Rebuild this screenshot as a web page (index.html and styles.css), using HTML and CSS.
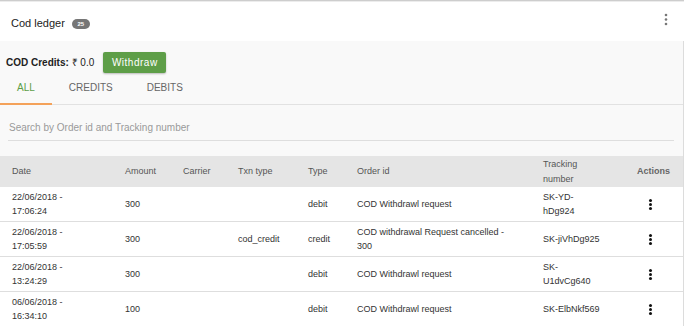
FILE: index.html
```html
<!DOCTYPE html>
<html>
<head>
<meta charset="utf-8">
<title>Cod ledger</title>
<link rel="stylesheet" href="styles.css">
</head>
<body>
<!-- card header -->
<div class="topbar">
	<h1 class="title">Cod ledger</h1>
	<span class="badge">25</span>
	<button class="menu">
		<svg width="4" height="14" viewBox="0 0 4 14"><circle cx="2" cy="2" r="1.3"/><circle cx="2" cy="6.5" r="1.3"/><circle cx="2" cy="11" r="1.3"/></svg>
	</button>
</div>

<div class="panel">
	<div class="credits">
		<span class="credits-label"><b>COD Credits:</b> ₹ 0.0</span>
		<button class="withdraw">Withdraw</button>
	</div>

	<div class="tabs">
		<span class="tab active">ALL</span>
		<span class="tab">CREDITS</span>
		<span class="tab">DEBITS</span>
	</div>

	<div class="search">
		<input type="text" placeholder="Search by Order id and Tracking number">
	</div>

	<table class="ledger">
		<colgroup>
			<col style="width:113px"><col style="width:58px"><col style="width:55px"><col style="width:70px">
			<col style="width:49px"><col style="width:186px"><col style="width:94px"><col style="width:58px">
		</colgroup>
		<thead>
			<tr>
				<th class="date">Date</th>
				<th>Amount</th>
				<th>Carrier</th>
				<th>Txn type</th>
				<th>Type</th>
				<th>Order id</th>
				<th class="track">Tracking number</th>
				<th class="actions">Actions</th>
			</tr>
		</thead>
		<tbody>
			<tr>
				<td class="date">22/06/2018 - 17:06:24</td>
				<td>300</td>
				<td></td>
				<td></td>
				<td>debit</td>
				<td>COD Withdrawl request</td>
				<td class="track">SK-YD-hDg924</td>
				<td class="actions"><span class="dots"></span></td>
			</tr>
			<tr>
				<td class="date">22/06/2018 - 17:05:59</td>
				<td>300</td>
				<td></td>
				<td>cod_credit</td>
				<td>credit</td>
				<td>COD withdrawal Request cancelled - 300</td>
				<td class="track">SK-jiVhDg925</td>
				<td class="actions"><span class="dots"></span></td>
			</tr>
			<tr>
				<td class="date">22/06/2018 - 13:24:29</td>
				<td>300</td>
				<td></td>
				<td></td>
				<td>debit</td>
				<td>COD Withdrawl request</td>
				<td class="track">SK-U1dvCg640</td>
				<td class="actions"><span class="dots"></span></td>
			</tr>
			<tr>
				<td class="date">06/06/2018 - 16:34:10</td>
				<td>100</td>
				<td></td>
				<td></td>
				<td>debit</td>
				<td>COD Withdrawl request</td>
				<td class="track">SK-ElbNkf569</td>
				<td class="actions"><span class="dots"></span></td>
			</tr>
		</tbody>
	</table>
</div>
</body>
</html>
```

FILE: styles.css
```css
body {
	margin: 0;
	font-family: "Liberation Sans", Arial, Helvetica, sans-serif;
	background-color: #fff;
	color: #333;
}

/* header bar */
.topbar {
	height: 41px;
	display: flex;
	align-items: center;
	padding: 3px 15px 0 11px;
	box-sizing: border-box;
	border-top: 1px solid #cdcdcd;
	box-shadow: inset 0 1px 0 #ececec;
	background: #fff;
}
.title {
	margin: 0;
	font-size: 11px;
	font-weight: normal;
	color: #222;
}
.badge {
	margin: 3px 0 0 7px;
	width: 18px;
	height: 10px;
	line-height: 10px;
	border-radius: 5px;
	background: #767676;
	color: #fff;
	font-size: 6px;
	font-weight: bold;
	text-align: center;
}
.menu {
	margin-left: auto;
	margin-top: -5px;
	margin-right: 1px;
	padding: 0;
	border: 0;
	background: none;
	fill: #777;
	display: flex;
}

/* lower panel */
.panel {
	background: #f9f9f9;
	border-right: 1px solid #dcdcdc;
	width: 683px;
}
.credits {
	height: 34px;
	display: flex;
	align-items: flex-start;
	padding: 11px 0 0 6px;
	box-sizing: border-box;
	font-size: 10px;
	color: #222;
}
.credits-label {
	line-height: 21px;
}
.withdraw {
	margin-left: 9px;
	width: 63px;
	height: 21px;
	border: 0;
	border-radius: 2px;
	background: #5e9e48;
	color: #fff;
	font-family: inherit;
	font-size: 10px;
	letter-spacing: 0.5px;
	padding: 0;
	box-shadow: 0 1px 2px rgba(0, 0, 0, 0.25);
}

.tabs {
	display: flex;
	height: 29px;
	border-bottom: 1px solid #e2e2e2;
}
.tab {
	padding: 0 17px;
	font-size: 10px;
	line-height: 25px;
	color: #666;
	border-bottom: 2px solid transparent;
	margin-bottom: -1px;
}
.tab.active {
	color: #5e9e48;
	border-bottom-color: #f4a25a;
}

.search {
	padding: 10px 9px 15px 8px;
}
.search input {
	display: block;
	width: 100%;
	box-sizing: border-box;
	height: 26px;
	padding: 0 1px;
	border: 0;
	border-bottom: 1px solid #dedede;
	background: transparent;
	font-family: inherit;
	font-size: 10px;
	outline: none;
}
.search input::placeholder {
	color: #9a9a9a;
}

/* table */
.ledger {
	width: 683px;
	border-collapse: collapse;
	table-layout: fixed;
	background: #fff;
}
.ledger th {
	background: #e5e5e5;
	height: 31px;
	padding: 0 12px;
	text-align: left;
	font-size: 9px;
	font-weight: normal;
	color: #555;
	line-height: 15px;
}
.ledger th.actions {
	font-weight: bold;
	color: #666;
}
.ledger td {
	height: 34px;
	padding: 0 12px;
	font-size: 9px;
	line-height: 14px;
	color: #333;
	border-bottom: 1px solid #dedede;
}
.ledger .date {
	padding-right: 40px;
}
.ledger .track {
	padding-right: 23px;
}
.ledger td.actions {
	padding-left: 24px;
}

/* row kebab */
.dots {
	display: block;
	width: 3px;
	height: 3px;
	border-radius: 50%;
	background: #111;
	box-shadow: 0 -4px 0 #111, 0 4px 0 #111;
}
```
